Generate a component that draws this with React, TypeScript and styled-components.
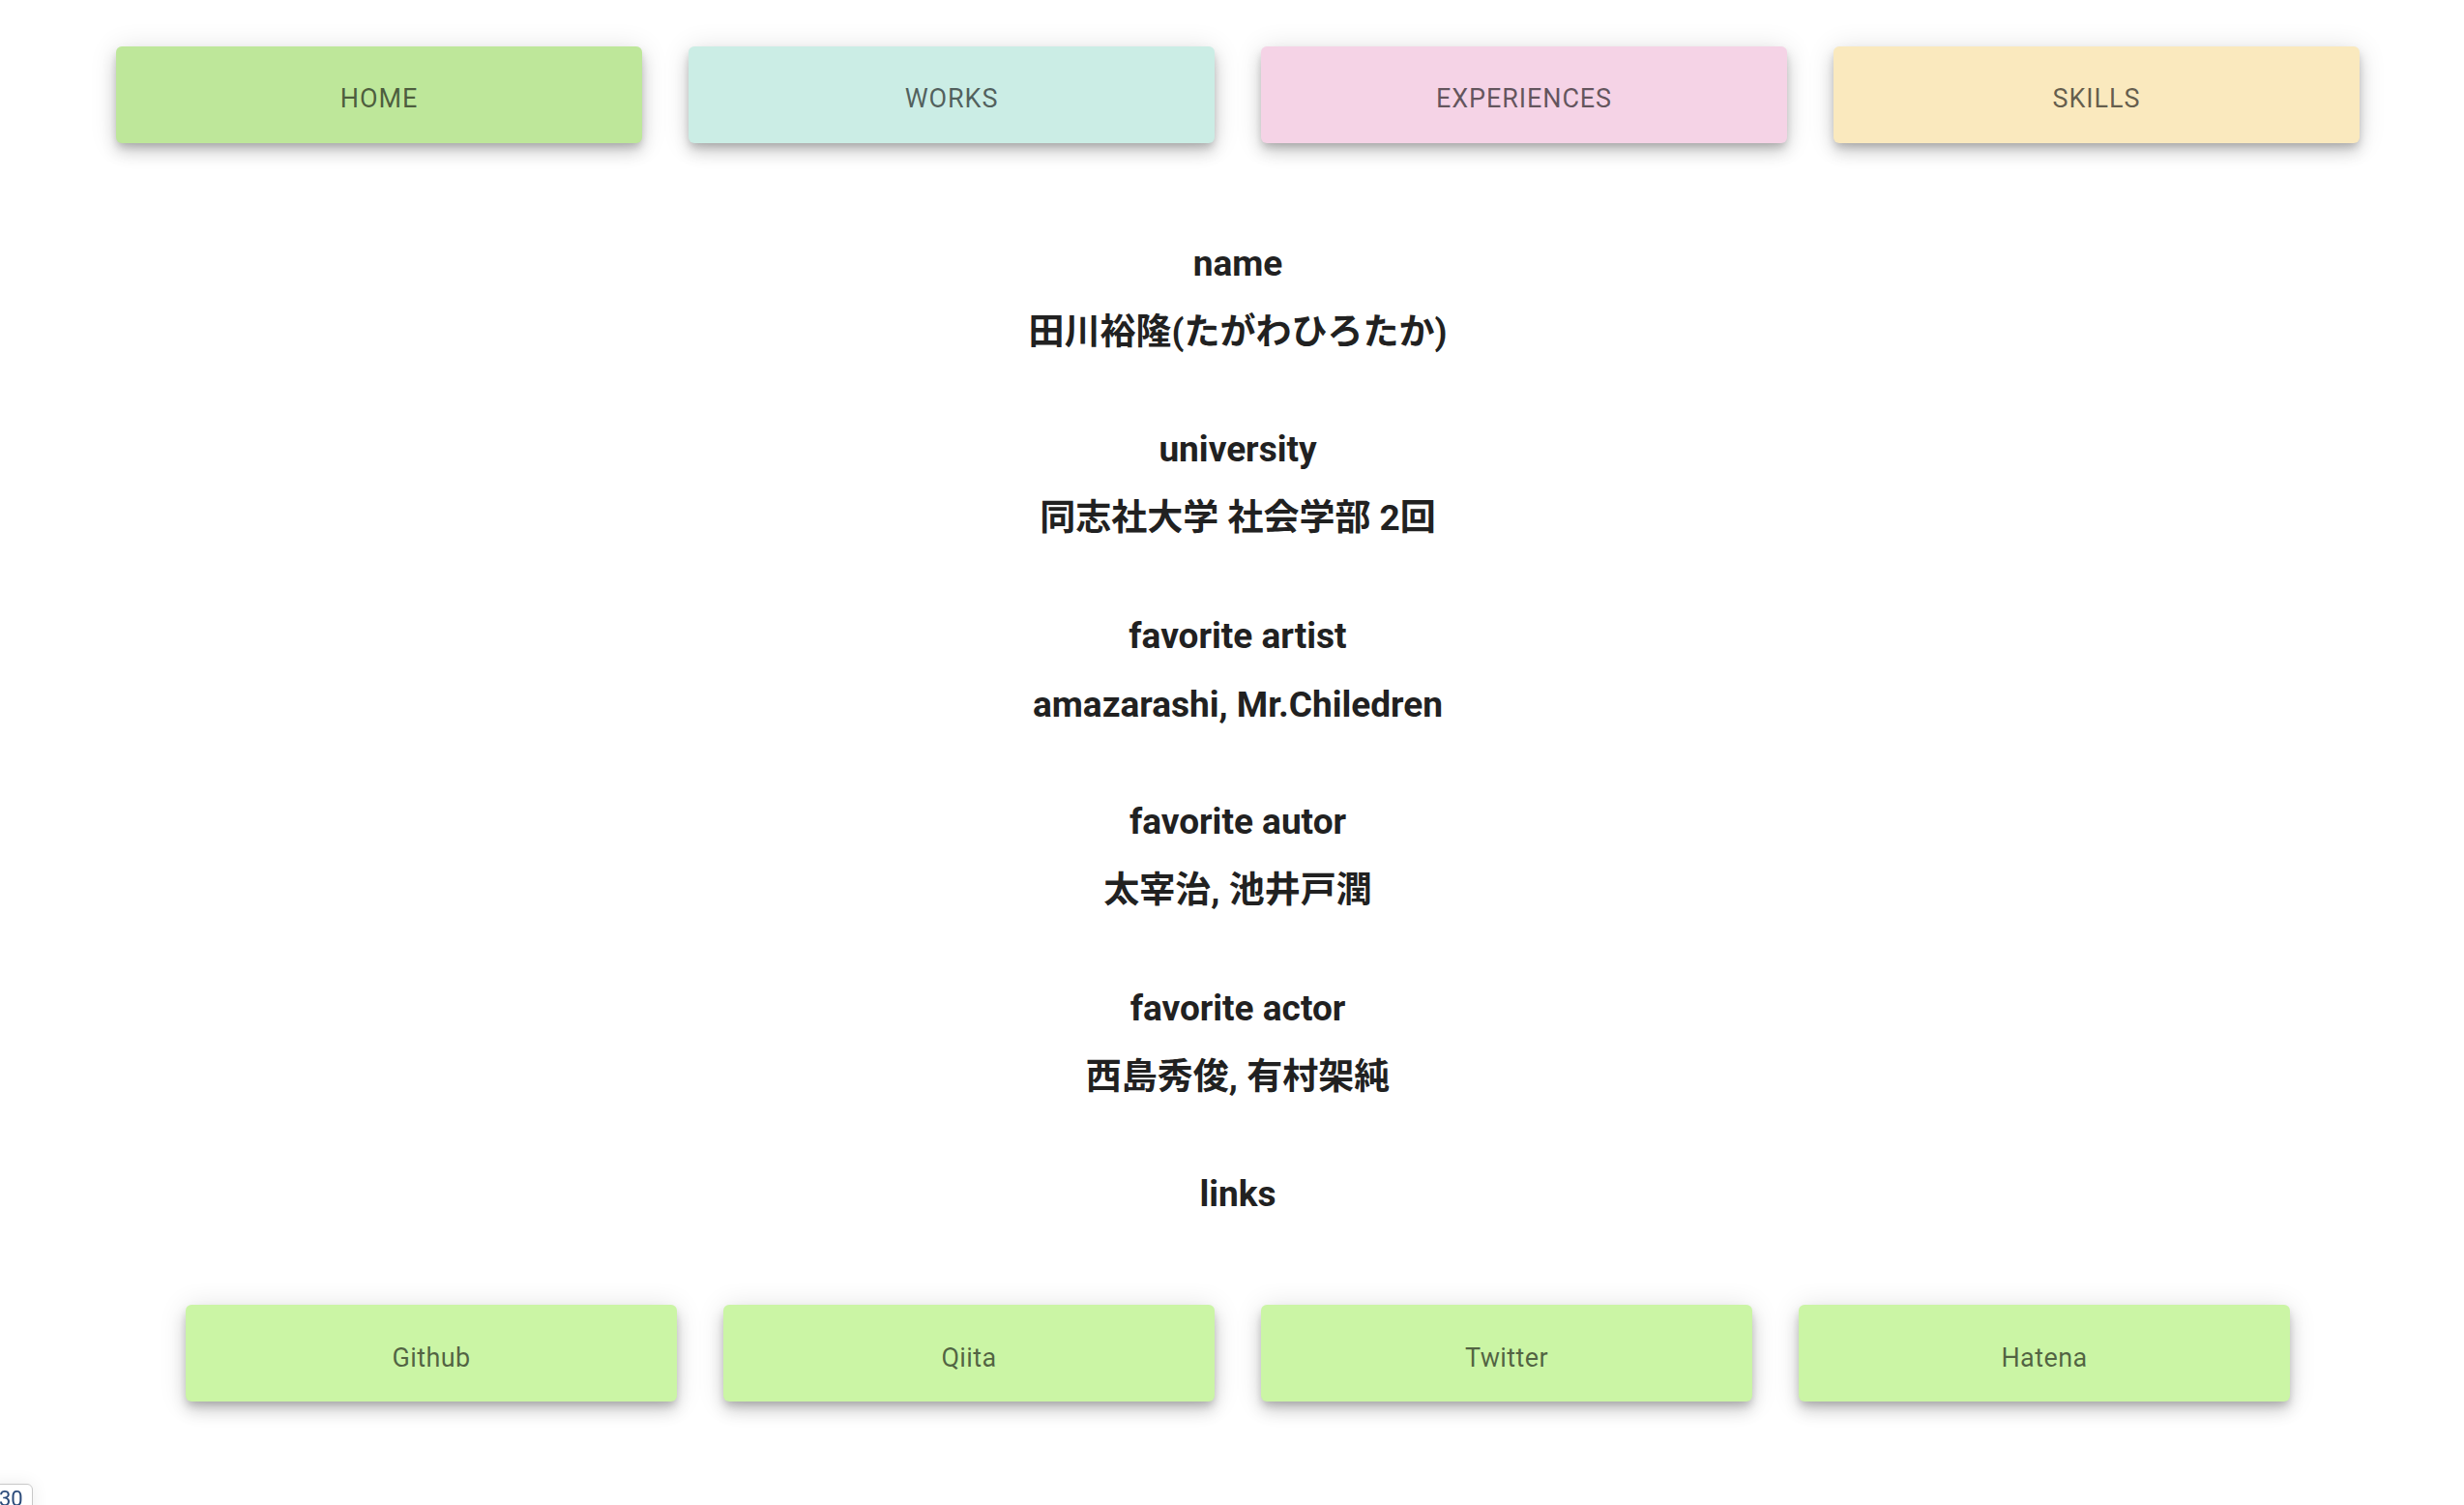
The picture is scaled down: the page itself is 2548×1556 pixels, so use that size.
import React from "react";
import styled, { createGlobalStyle } from "styled-components";

const GlobalStyle = createGlobalStyle`
  html, body {
    margin: 0;
    padding: 0;
    background: #ffffff;
  }
  body {
    font-family: Roboto, "Noto Sans CJK JP", "Noto Sans", sans-serif;
    color: rgba(0, 0, 0, 0.87);
  }
`;

const Page = styled.div`
  min-height: 1556px;
  box-sizing: border-box;
  padding: 48px 0 0 12px;
  display: flex;
  flex-direction: column;
  align-items: center;
`;

const NavBar = styled.nav`
  display: grid;
  grid-template-columns: repeat(4, 544px);
  gap: 48px;
`;

const Tile = styled.button<{ $bg: string; $upper?: boolean }>`
  height: 100px;
  border: none;
  border-radius: 6px;
  background: ${(p) => p.$bg};
  color: rgba(0, 0, 0, 0.6);
  font-family: Roboto, sans-serif;
  font-size: 27px;
  font-weight: 400;
  letter-spacing: ${(p) => (p.$upper ? "0.9px" : "0.4px")};
  text-transform: ${(p) => (p.$upper ? "uppercase" : "none")};
  box-shadow: 0px 5px 8px -2px rgba(0, 0, 0, 0.2),
    0px 10px 16px 0px rgba(0, 0, 0, 0.14),
    0px 2px 29px 0px rgba(0, 0, 0, 0.12);
  cursor: pointer;
  padding: ${(p) => (p.$upper ? "8px 0 0" : "11px 0 0")};
`;

const Profile = styled.main`
  margin-top: 102px;
  display: flex;
  flex-direction: column;
  align-items: center;
  gap: 76.4px;
`;

const Section = styled.section`
  display: flex;
  flex-direction: column;
  align-items: center;
  gap: 26px;
`;

const Text = styled.div`
  font-family: Roboto, "Noto Sans CJK JP", sans-serif;
  font-size: 37px;
  font-weight: 700;
  line-height: 45px;
  color: #212121;
  text-align: center;
  white-space: nowrap;
`;

const Links = styled.div`
  margin-top: 92px;
  display: grid;
  grid-template-columns: repeat(4, 508px);
  gap: 48px;
`;

const Badge = styled.div`
  position: fixed;
  left: -12px;
  bottom: -12px;
  width: 46px;
  height: 34px;
  box-sizing: border-box;
  background: #fff;
  border: 1px solid #c8c8c8;
  border-radius: 6px;
  box-shadow: 0 0 18px rgba(0, 0, 0, 0.08);
  font-family: Roboto, sans-serif;
  font-size: 22px;
  line-height: 30px;
  color: #2a4a7a;
  padding-left: 10px;
  overflow: hidden;
`;

const nav = [
  { label: "Home", bg: "#bee79a" },
  { label: "Works", bg: "#cbede5" },
  { label: "Experiences", bg: "#f5d3e6" },
  { label: "Skills", bg: "#fae9be" },
];

const profile = [
  { label: "name", value: "田川裕隆(たがわひろたか)" },
  { label: "university", value: "同志社大学 社会学部 2回" },
  { label: "favorite artist", value: "amazarashi, Mr.Chiledren" },
  { label: "favorite autor", value: "太宰治, 池井戸潤" },
  { label: "favorite actor", value: "西島秀俊, 有村架純" },
];

const links = ["Github", "Qiita", "Twitter", "Hatena"];

export default function App() {
  return (
    <>
      <GlobalStyle />
      <Page>
        <NavBar>
          {nav.map((n) => (
            <Tile key={n.label} $bg={n.bg} $upper>
              {n.label}
            </Tile>
          ))}
        </NavBar>
        <Profile>
          {profile.map((p) => (
            <Section key={p.label}>
              <Text>{p.label}</Text>
              <Text>{p.value}</Text>
            </Section>
          ))}
          <Section>
            <Text>links</Text>
          </Section>
        </Profile>
        <Links>
          {links.map((l) => (
            <Tile key={l} $bg="#cbf5a5">
              {l}
            </Tile>
          ))}
        </Links>
        <Badge>30</Badge>
      </Page>
    </>
  );
}
